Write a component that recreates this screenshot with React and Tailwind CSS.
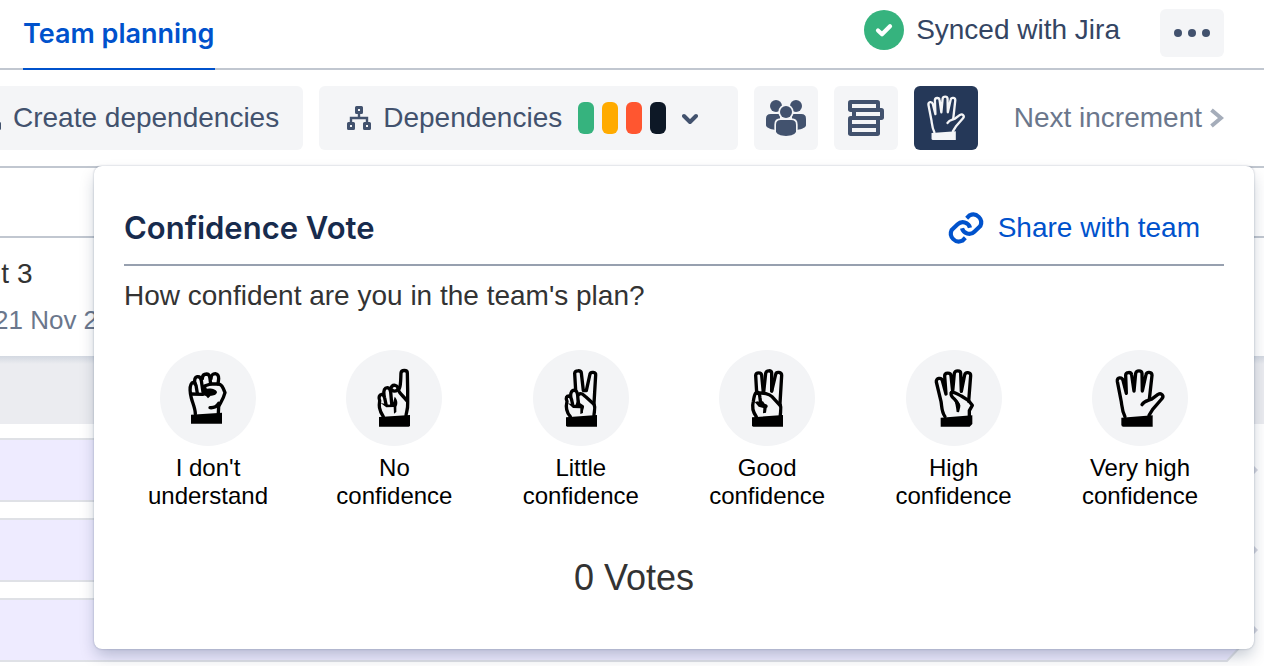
import React from "react";

const SANS = "font-['Liberation_Sans',Arial,sans-serif]";

function DependencyIcon() {
  return (
    <svg viewBox="0 0 24 24" className="size-6 shrink-0" fill="none" stroke="currentColor" aria-hidden="true">
      <g strokeWidth="3" strokeLinejoin="round">
        <rect x="9.5" y="1.5" width="5" height="5" />
        <rect x="1.5" y="17.5" width="5" height="5" />
        <rect x="17.5" y="17.5" width="5" height="5" />
      </g>
      <path d="M12 7v5M4 17v-5h16v5" strokeWidth="2.4" />
    </svg>
  );
}

function PeopleIcon() {
  return (
    <svg viewBox="618 90 120 108" className="h-9 w-10" fill="currentColor" aria-hidden="true">
      <circle cx="648" cy="108" r="18" />
      <circle cx="708" cy="108" r="18" />
      <path d="M632 132H660V180H645C630 178 618 172 618 166V146Q618 132 632 132Z" />
      <path d="M724 132H696V180H711C726 178 738 172 738 166V146Q738 132 724 132Z" />
      <g className="stroke-[#f4f5f7]" strokeWidth="10" paintOrder="stroke">
        <path d="M662 150H694Q708 150 708 164V184C708 192 694 198 678 198S648 192 648 184V164Q648 150 662 150Z" />
        <circle cx="678" cy="126" r="18" />
      </g>
    </svg>
  );
}

function StackIcon() {
  return (
    <svg viewBox="864 90 108 108" className="size-9" fill="currentColor" aria-hidden="true">
      <rect x="864" y="90" width="96" height="36" rx="8" />
      <rect x="876" y="114" width="96" height="36" rx="8" />
      <rect x="864" y="138" width="96" height="60" rx="8" />
      <g className="fill-[#f4f5f7]">
        <rect x="876" y="102" width="72" height="12" />
        <rect x="888" y="126" width="72" height="12" />
        <rect x="876" y="150" width="72" height="12" />
        <rect x="876" y="174" width="72" height="12" />
      </g>
    </svg>
  );
}

function LinkIcon() {
  return (
    <svg viewBox="144 396 108 102" className="h-[34px] w-9 overflow-visible" fill="none" stroke="currentColor" strokeWidth="12.5" aria-hidden="true">
      <path d="M200 418L209 409A24 24 0 0 1 241 441L223 458A22 22 0 0 1 186 448" />
      <path d="M196 476L187 485A24 24 0 0 1 155 453L173 436A22 22 0 0 1 210 446" />
    </svg>
  );
}

const FIVE = {
  cuff: "M124 233L218 226V260H130Q124 260 124 254Z",
  lines: [
    "M135 230C126 212 126 200 124 186L112 124C110 111 126 110 129 121L139 160L137 106C137 95 154 95 155 105L162 153L167 100C169 90 185 90 186 100L187 153L198 104C200 94 216 95 216 106L208 178",
    "M186 194C194 181 204 183 214 178L234 163C244 157 254 168 245 177L218 208L207 226",
  ],
};

const HANDS = {
  fist: {
    x: 30,
    cuff: "M123 224L216 218V251H123Z",
    lines: [
      "M136 222C136 205 128 190 124 174C120 158 119 142 123 133C127 124 136 127 138 136L142 160",
      "M135 132C132 118 134 112 142 110C150 109 153 116 154 122L159 156",
      "M157 116C157 107 162 102 170 102C178 103 180 109 180 116L182 132L163 138L168 158",
      "M183 116C184 104 188 101 196 101C204 102 206 108 206 116L204 132H182",
      "M204 132C214 132 218 140 225 158C220 178 210 190 206 200L205 220",
      "M124 162L158 163",
      "M180 203C192 204 200 200 206 190",
    ],
    solid: "M162 148C178 142 198 146 201 156C200 165 190 167 182 167L174 175L168 168L160 166Z",
  },
  one: {
    x: 30,
    cuff: "M129 231L222 225V256Q222 260 218 260H129Z",
    lines: [
      "M142 230C128 208 129 196 131 182C127 172 130 164 137 163C143 164 145 168 146 174L150 193",
      "M144 165C142 150 146 143 154 143C161 144 163 150 164 156L167 190",
      "M164 150C164 140 170 135 177 136C185 138 187 143 185 149C179 154 172 154 168 150",
      "M190 146C195 135 194 112 195 99C196 89 214 89 214 99L215 150V190C216 210 210 218 210 228",
      "M186 149C193 163 203 169 214 184",
    ],
    solid: "M134 189L160 194L172 186L176 170C184 178 187 190 181 200V216L174 221L173 201L151 202Z",
  },
  two: {
    x: 33,
    cuff: "M132 232L225 225V260H136Q132 260 132 256Z",
    lines: [
      "M145 230C131 214 132 196 135 184C130 172 134 168 141 168C147 169 147 174 149 180L152 194",
      "M146 170C145 155 151 150 158 151C166 152 166 159 167 166L169 193",
      "M161 151L158 100C159 90 177 90 178 99L184 152H193L204 102C206 94 222 96 221 105L216 190C222 208 215 218 216 228",
      "M170 164C178 156 184 165 192 171L215 192",
    ],
    solid: "M138 190L160 195L170 174L175 190L184 196C190 200 182 208 183 219L175 222L175 205L153 204Z",
  },
  three: {
    x: 33,
    cuff: "M132 232L225 225V260H136Q132 260 132 256Z",
    lines: [
      "M145 230C132 212 132 198 136 184C138 175 138 163 144 158C154 153 155 164 156 174L158 190",
      "M146 158L143 106C144 96 160 96 161 106L166 158",
      "M167 156L173 100C175 90 190 90 191 99L191 153",
      "M191 153L203 103C205 94 221 96 221 106L216 190C222 208 216 218 217 228",
      "M148 160C166 157 184 162 192 170L216 196",
    ],
    solid: "M140 186L150 184L160 190L164 182L170 191C181 194 181 200 176 204L174 218L165 220L166 204L152 200Z",
  },
  four: {
    x: 36,
    cuff: "M140 233L235 226V252L227 260H140Z",
    lines: [
      "M153 230C142 214 144 200 141 184L127 126C125 113 143 112 145 122L156 162L152 108C152 97 170 97 171 107L176 154L181 100C183 90 200 90 200 100L202 154L212 105C214 95 231 96 230 107L224 184",
      "M172 158C180 153 192 164 202 168L224 182L235 196L226 212V228",
      "M172 158C168 167 176 173 182 178C188 184 190 190 194 196",
    ],
    solid: "M180 174C190 178 198 190 199 200L195 217L188 216C186 200 184 190 180 174Z",
  },
  five: { x: 36, ...FIVE },
};

function VoteHand({ name }) {
  const hand = HANDS[name];
  return (
    <svg viewBox={`${hand.x} 30 288 288`} className="size-full" aria-hidden="true">
      <g fill="none" stroke="currentColor" strokeWidth="10" strokeLinecap="round" strokeLinejoin="round">
        {hand.lines.map((d) => (
          <path key={d} d={d} />
        ))}
      </g>
      <path d={hand.cuff} fill="currentColor" />
      {hand.solid && <path d={hand.solid} fill="currentColor" />}
    </svg>
  );
}

function HandIcon() {
  return (
    <svg viewBox="104 86 152 178" className="h-[46px] w-10" aria-hidden="true">
      <g fill="none" stroke="currentColor" strokeWidth="9" strokeLinecap="round" strokeLinejoin="round">
        {FIVE.lines.map((d) => (
          <path key={d} d={d} />
        ))}
      </g>
      <path d={FIVE.cuff} fill="currentColor" />
    </svg>
  );
}

const VOTES = [
  { hand: "fist", label: "I don't understand" },
  { hand: "one", label: "No confidence" },
  { hand: "two", label: "Little confidence" },
  { hand: "three", label: "Good confidence" },
  { hand: "four", label: "High confidence" },
  { hand: "five", label: "Very high confidence" },
];

function Header() {
  return (
    <header className="flex h-[70px] items-start justify-between border-b-2 border-[#c1c7d0] pr-10 pl-[23px]">
      <nav>
        <a href="#team-planning" className="flex h-[70px] items-center border-b-2 border-[#0052cc] font-['Inter',sans-serif] text-[27px] font-semibold text-[#0052cc]">
          Team planning
        </a>
      </nav>
      <div className="flex items-start gap-10">
        <div className="flex h-[60px] items-center gap-3 text-[#344563]">
          <svg viewBox="0 0 40 40" className="size-10" aria-hidden="true">
            <circle cx="20" cy="20" r="20" fill="#36b37e" />
            <path d="M14 20.5L18 24.2L26 16.2" fill="none" stroke="#fff" strokeWidth="4.2" strokeLinecap="round" strokeLinejoin="round" />
          </svg>
          <span>Synced with Jira</span>
        </div>
        <button type="button" aria-label="More actions" className="mt-[9px] flex h-12 w-16 items-center justify-center gap-1.5 rounded-md bg-[#f4f5f7]">
          <span className="size-2 rounded-full bg-[#42526e]" />
          <span className="size-2 rounded-full bg-[#42526e]" />
          <span className="size-2 rounded-full bg-[#42526e]" />
        </button>
      </div>
    </header>
  );
}

function Toolbar() {
  return (
    <div className="flex h-[98px] items-start gap-4 overflow-hidden border-b-2 border-[#c1c7d0] pt-4 pr-10 text-[#42526e]">
      <button type="button" className="-ml-[51px] flex h-16 shrink-0 items-center gap-3 rounded-md bg-[#f4f5f7] pr-6 pl-7">
        <DependencyIcon />
        Create dependencies
      </button>
      <button type="button" className="flex h-16 shrink-0 items-center rounded-md bg-[#f4f5f7] pr-10 pl-7">
        <DependencyIcon />
        <span className="ml-3">Dependencies</span>
        <span className="ml-4 flex gap-2">
          <span className="h-8 w-4 rounded-md bg-[#36b37e]" />
          <span className="h-8 w-4 rounded-md bg-[#ffab00]" />
          <span className="h-8 w-4 rounded-md bg-[#ff5630]" />
          <span className="h-8 w-4 rounded-md bg-[#0d1826]" />
        </span>
        <svg viewBox="0 0 16 16" className="ml-4 size-4" fill="none" stroke="currentColor" strokeWidth="4" strokeLinecap="round" strokeLinejoin="round" aria-hidden="true">
          <path d="M2 6L8 12L14 6" />
        </svg>
      </button>
      <button type="button" aria-label="Teams" className="flex size-16 shrink-0 items-center justify-center rounded-md bg-[#f4f5f7]">
        <PeopleIcon />
      </button>
      <button type="button" aria-label="Rows" className="flex size-16 shrink-0 items-center justify-center rounded-md bg-[#f4f5f7]">
        <StackIcon />
      </button>
      <button type="button" aria-label="Confidence vote" aria-expanded="true" className="flex size-16 shrink-0 items-center justify-center rounded-md bg-[#253858] text-[#f4f5f7]">
        <HandIcon />
      </button>
      <a href="#next" className="ml-auto flex h-16 shrink-0 items-center gap-2 text-[#6b778c]">
        Next increment
        <svg viewBox="0 0 14 20" className="h-5 w-3.5 text-[#a5adba]" fill="none" stroke="currentColor" strokeWidth="4" aria-hidden="true">
          <path d="M1.5 2L11 10L1.5 18" />
        </svg>
      </a>
    </div>
  );
}

function PlanRow() {
  return (
    <div className="flex h-16 pr-1.5">
      <div className="flex-1 border-y-2 border-[#dfe1e6] bg-[#eeebff]" />
      <svg viewBox="0 0 32 64" className="h-16 w-8" aria-hidden="true">
        <path d="M0 1H1L30 32L1 63H0" fill="#eeebff" stroke="#dfe1e6" strokeWidth="2" />
        <path d="M27 27L32 32L27 37Z" fill="#d3d5df" />
      </svg>
    </div>
  );
}

function Board() {
  return (
    <main>
      <div className="h-[70px] border-b-2 border-[#c1c7d0]" />
      <div className="h-[118px] overflow-hidden bg-white pt-4 whitespace-nowrap">
        <h2 className="-ml-16 leading-10 text-[#333333]">Sprint 3</h2>
        <p className="mt-1.5 -ml-1.5 text-[26px] leading-10 text-[#6b778c]">21 Nov 2022</p>
      </div>
      <div className="mb-3.5 h-[68px] bg-[#ebecf0]">
        <div className="h-2 bg-linear-to-b from-[#d3d8e1] to-[#ebecf0]" />
      </div>
      <div className="flex flex-col gap-4 pb-1">
        <PlanRow />
        <PlanRow />
        <PlanRow />
      </div>
    </main>
  );
}

function ConfidenceVote() {
  return (
    <section
      aria-labelledby="vote-title"
      className="absolute top-[166px] right-2.5 left-[94px] rounded-lg bg-white px-[30px] pt-[38px] pb-[47px] shadow-[0_8px_16px_-2px_rgba(9,30,66,0.25),0_0_2px_rgba(9,30,66,0.31)]"
    >
      <div className="flex h-[62px] items-start justify-between border-b-2 border-[#97a0af] pr-6 leading-12">
        <h1 id="vote-title" className="font-['Inter',sans-serif] text-[31px] font-semibold text-[#172b4d]">
          Confidence Vote
        </h1>
        <a href="#share" className="flex items-center gap-3.5 text-[#0052cc]">
          <LinkIcon />
          Share with team
        </a>
      </div>
      <p className="pt-3 leading-9 text-[#333333]">How confident are you in the team's plan?</p>
      <div className="mt-9 flex justify-between px-6">
        {VOTES.map((vote) => (
          <button key={vote.hand} type="button" className="flex w-[120px] flex-col items-center gap-2 text-2xl leading-7 text-black">
            <span className="size-24 rounded-full bg-[#f3f4f6]">
              <VoteHand name={vote.hand} />
            </span>
            <span>{vote.label}</span>
          </button>
        ))}
      </div>
      <p className="mt-11 pr-20 text-center text-4xl leading-12 text-[#333333]">0 Votes</p>
    </section>
  );
}

export default function App() {
  return (
    <div className={`relative min-h-screen overflow-hidden bg-white text-[28px] ${SANS}`}>
      <Header />
      <Toolbar />
      <Board />
      <ConfidenceVote />
    </div>
  );
}
